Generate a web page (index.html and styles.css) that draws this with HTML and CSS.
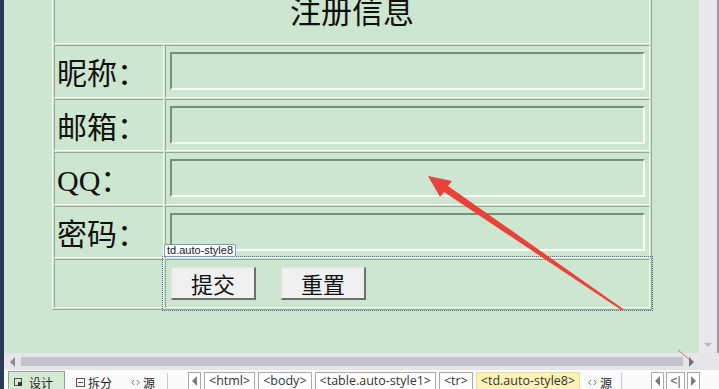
FILE: index.html
```html
<!DOCTYPE html>
<html lang="zh-CN">
<head>
  <meta charset="UTF-8">
  <meta name="viewport" content="width=device-width, initial-scale=1.0">
  <title>注册信息 - 设计视图</title>
  <link rel="stylesheet" href="styles.css">
</head>
<body>
  <div class="ide">
    <!-- area de design com a tabela -->
    <div class="editor">
      <div class="design">
        <table class="auto-style1">
          <tr>
            <td colspan="2" class="title">注册信息</td>
          </tr>
          <tr>
            <td class="label">昵称：</td>
            <td class="field"><input type="text"></td>
          </tr>
          <tr>
            <td class="label">邮箱：</td>
            <td class="field"><input type="text"></td>
          </tr>
          <tr>
            <td class="label">QQ：</td>
            <td class="field"><input type="text"></td>
          </tr>
          <tr>
            <td class="label">密码：</td>
            <td class="field"><input type="password"></td>
          </tr>
          <tr>
            <td class="label last"></td>
            <td class="auto-style8">
              <span class="tag-hint">td.auto-style8</span>
              <button type="submit">提交</button>
              <button type="reset">重置</button>
            </td>
          </tr>
        </table>
      </div>
      <div class="vscroll"><span class="vscroll-down"></span></div>
    </div>

    <!-- barra de rolagem horizontal -->
    <div class="hscroll">
      <span class="arrow-left"></span>
      <span class="thumb"></span>
      <span class="arrow-right"></span>
    </div>

    <!-- barra de status: abas e caminho das tags -->
    <div class="statusbar">
      <div class="tab active">
        <svg class="ico" viewBox="0 0 9 9"><rect x="0.5" y="0.5" width="7" height="7" fill="none" stroke="#555"/><rect x="4" y="4" width="4" height="4" fill="#333"/></svg>
        设计
      </div>
      <div class="tab split">
        <svg class="ico" viewBox="0 0 9 9"><rect x="0.5" y="0.5" width="8" height="8" fill="none" stroke="#555"/><line x1="2" y1="4.5" x2="7" y2="4.5" stroke="#555"/></svg>
        拆分
      </div>
      <div class="tab source">
        <svg class="ico" viewBox="0 0 9 9"><path d="M3 2 L0.8 4.5 L3 7 M6 2 L8.2 4.5 L6 7" fill="none" stroke="#777"/></svg>
        源
      </div>
      <span class="sep"></span>
      <span class="nav-btn nav-first"><span class="tri-left"></span></span>
      <ul class="crumbs">
        <li>&lt;html&gt;</li>
        <li>&lt;body&gt;</li>
        <li>&lt;table.auto-style1&gt;</li>
        <li>&lt;tr&gt;</li>
        <li class="current">&lt;td.auto-style8&gt;</li>
      </ul>
      <div class="tab source tail">
        <svg class="ico" viewBox="0 0 9 9"><path d="M3 2 L0.8 4.5 L3 7 M6 2 L8.2 4.5 L6 7" fill="none" stroke="#777"/></svg>
        源
      </div>
      <span class="sep end"></span>
      <span class="nav-btn"><span class="tri-left"></span></span>
      <span class="nav-btn mini">&lt;|</span>
      <span class="nav-btn"><span class="tri-right"></span></span>
    </div>

    <!-- seta vermelha de anotacao por cima do conteudo -->
    <svg class="note" width="719" height="389" viewBox="0 0 719 389">
      <polygon points="428,176 452,181 448,186 623.6,309.2 622.4,310.8 444,192 440,197" fill="#e8423a"/>
      <line x1="678" y1="350" x2="691" y2="361" stroke="#d9736c" stroke-width="1"/>
    </svg>
  </div>
</body>
</html>
```

FILE: styles.css
```css
/* base */
* {
  box-sizing: border-box;
}

body {
  margin: 0;
  width: 719px;
  height: 389px;
  overflow: hidden;
  background: #fafafa;
  font-family: "Liberation Serif", "Noto Sans CJK SC", serif;
}

/* janela do editor */
.ide {
  position: relative;
  height: 389px;
  display: grid;
  grid-template-rows: 353px 17px 1fr;
  border-left: 4px solid #2c3a57;
}

.editor {
  display: flex;
  min-height: 0;
  overflow: hidden;
}

.design {
  flex: 1;
  background: #cde6cf;
  overflow: hidden;
}

.vscroll {
  width: 20px;
  background: #e9e7ec;
  border-right: 2px solid #9a98a6;
  display: flex;
  flex-direction: column;
  justify-content: flex-end;
  align-items: center;
  padding-bottom: 6px;
}

.vscroll-down {
  width: 0;
  height: 0;
  border-left: 4px solid transparent;
  border-right: 4px solid transparent;
  border-top: 4px solid #b9b9c2;
}

/* tabela do formulario */
.auto-style1 {
  width: 600px;
  margin: -20px 0 0 48px;
  border-spacing: 1px;
  border: 1px solid;
  border-color: #f4faf4 #9aa99b #9aa99b #f4faf4;
}

.auto-style1 td {
  height: 52.6px;
  padding: 0 4px;
  border: 1px solid;
  border-color: #97a698 #f4faf4 #f4faf4 #97a698;
  vertical-align: middle;
  color: #111;
}

.auto-style1 .title {
  height: 62px;
  padding-bottom: 8px;
  text-align: center;
  font-size: 31px;
}

.auto-style1 .label {
  width: 110px;
  padding-left: 2px;
  font-size: 30px;
}

.auto-style1 .last,
.auto-style1 .auto-style8 {
  height: 49px;
}

.field input {
  display: block;
  width: 100%;
  height: 38px;
  margin: 0;
  background: transparent;
  border: 2px solid;
  border-color: #7b8b7c #f6fbf6 #f6fbf6 #7b8b7c;
}

/* celula dos botoes, selecionada no designer */
.auto-style8 {
  position: relative;
  outline: 1px dotted #4d6591;
  outline-offset: 2px;
}

.auto-style8 button {
  width: 85px;
  height: 33px;
  margin: 0 20px 0 1px;
  padding: 0;
  background: #f0f0f0;
  border: 1px solid;
  border-width: 1px 2px 2px 1px;
  border-color: #e2e2e2 #6f6f6f #6f6f6f #e2e2e2;
  font-family: "Noto Sans CJK SC", sans-serif;
  font-size: 22px;
  line-height: 28px;
  color: #111;
}

.tag-hint {
  position: absolute;
  left: -2px;
  top: -16px;
  height: 13px;
  padding: 0 2px;
  background: #fbfdff;
  border: 1px solid #7d97b8;
  border-radius: 2px;
  font-family: "Liberation Sans", sans-serif;
  font-size: 11px;
  line-height: 11px;
  color: #1a1a1a;
}

/* rolagem horizontal */
.hscroll {
  display: flex;
  align-items: center;
  gap: 6px;
  padding: 0 25px 0 6px;
  background: #e6e6ea;
}

.arrow-left {
  width: 0;
  height: 0;
  border-top: 5px solid transparent;
  border-bottom: 5px solid transparent;
  border-right: 5px solid #8c8c94;
}

.thumb {
  flex: 1;
  height: 9px;
  background: #c3c3cb;
}

.arrow-right {
  width: 0;
  height: 0;
  border-top: 5px solid transparent;
  border-bottom: 5px solid transparent;
  border-left: 5px solid #6f6f78;
}

/* barra de status */
.statusbar {
  display: flex;
  align-items: flex-start;
  padding: 1px 0 0 4px;
  background: #fafafa;
  font-family: "Noto Sans CJK SC", sans-serif;
  font-size: 12px;
  line-height: 12px;
  color: #1e1e1e;
  overflow: hidden;
}

.tab {
  display: flex;
  align-items: center;
  gap: 3px;
  height: 18px;
  padding: 4px 0 0 5px;
  border: 1px solid transparent;
  border-bottom: 0;
  white-space: nowrap;
}

.tab.active {
  width: 57px;
  gap: 6px;
  background: #d5ead5;
  border-color: #86a886;
}

.tab.split {
  width: 47px;
  margin-left: 5px;
}

.tab.source {
  width: 36px;
  margin-left: 8px;
}

.tab.tail {
  margin-left: 2px;
  width: 32px;
}

.ico {
  width: 9px;
  height: 9px;
  flex: none;
}

.sep {
  width: 1px;
  height: 16px;
  margin: 2px 20px 0 6px;
  background: #c8c8c8;
}

.sep.end {
  margin: 2px 29px 0 7px;
}

.nav-btn {
  display: flex;
  align-items: center;
  justify-content: center;
  width: 13px;
  height: 17px;
  margin: 1px 2px 0 0;
  border: 1px solid #a8a8a8;
  border-bottom: 0;
  background: #fff;
  font-family: "Liberation Sans", sans-serif;
  font-size: 12px;
  color: #555;
}

.nav-btn.mini {
  width: 19px;
}

.nav-first {
  margin-right: 3px;
}

.tri-left {
  border-top: 5px solid transparent;
  border-bottom: 5px solid transparent;
  border-right: 5px solid #7a7a7a;
}

.tri-right {
  border-top: 5px solid transparent;
  border-bottom: 5px solid transparent;
  border-left: 5px solid #7a7a7a;
}

.crumbs {
  display: flex;
  gap: 3px;
  margin: 1px 0 0;
  padding: 0;
  list-style: none;
}

.crumbs li {
  height: 17px;
  padding: 1px 4px 0;
  border: 1px solid #a8a8a8;
  border-bottom: 0;
  background: #fff;
  font-family: "Open Sans", sans-serif;
  font-size: 12.5px;
  line-height: 14px;
  color: #333;
  white-space: nowrap;
}

.crumbs li.current {
  background: #fcf1b6;
  border-color: #eadb98;
}

/* anotacao */
.note {
  position: absolute;
  left: -4px;
  top: 0;
  pointer-events: none;
}
```
